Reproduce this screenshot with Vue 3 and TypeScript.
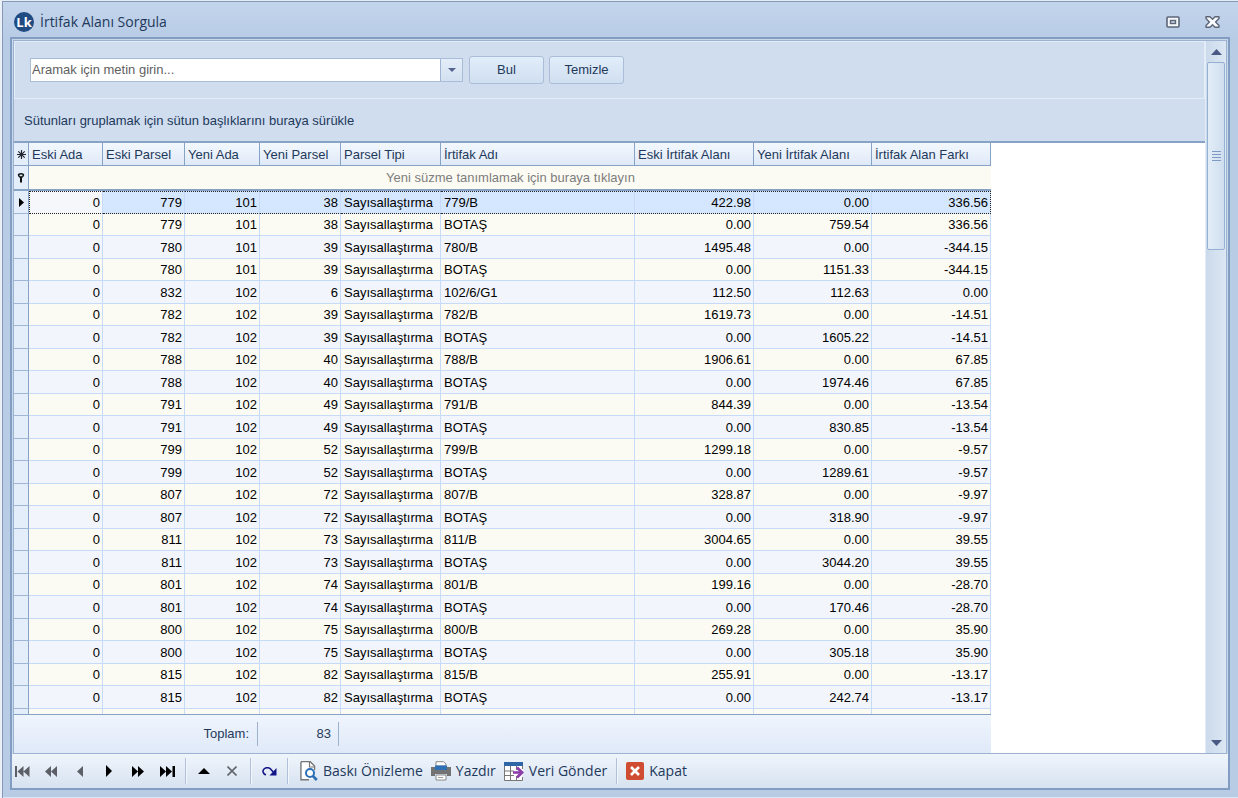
<script setup lang="ts">
import { ref } from 'vue'

interface Row {
  oldAda: string
  oldParsel: string
  newAda: string
  newParsel: string
  type: string
  name: string
  oldArea: string
  newArea: string
  diff: string
}

const columns = [
  'Eski Ada', 'Eski Parsel', 'Yeni Ada', 'Yeni Parsel', 'Parsel Tipi',
  'İrtifak Adı', 'Eski İrtifak Alanı', 'Yeni İrtifak Alanı', 'İrtifak Alan Farkı',
]

const make = (
  oldParsel: string, newAda: string, newParsel: string,
  name: string, oldArea: string, newArea: string, diff: string,
): Row => ({ oldAda: '0', oldParsel, newAda, newParsel, type: 'Sayısallaştırma', name, oldArea, newArea, diff })

const rows: Row[] = [
  make('779', '101', '38', '779/B', '422.98', '0.00', '336.56'),
  make('779', '101', '38', 'BOTAŞ', '0.00', '759.54', '336.56'),
  make('780', '101', '39', '780/B', '1495.48', '0.00', '-344.15'),
  make('780', '101', '39', 'BOTAŞ', '0.00', '1151.33', '-344.15'),
  make('832', '102', '6', '102/6/G1', '112.50', '112.63', '0.00'),
  make('782', '102', '39', '782/B', '1619.73', '0.00', '-14.51'),
  make('782', '102', '39', 'BOTAŞ', '0.00', '1605.22', '-14.51'),
  make('788', '102', '40', '788/B', '1906.61', '0.00', '67.85'),
  make('788', '102', '40', 'BOTAŞ', '0.00', '1974.46', '67.85'),
  make('791', '102', '49', '791/B', '844.39', '0.00', '-13.54'),
  make('791', '102', '49', 'BOTAŞ', '0.00', '830.85', '-13.54'),
  make('799', '102', '52', '799/B', '1299.18', '0.00', '-9.57'),
  make('799', '102', '52', 'BOTAŞ', '0.00', '1289.61', '-9.57'),
  make('807', '102', '72', '807/B', '328.87', '0.00', '-9.97'),
  make('807', '102', '72', 'BOTAŞ', '0.00', '318.90', '-9.97'),
  make('811', '102', '73', '811/B', '3004.65', '0.00', '39.55'),
  make('811', '102', '73', 'BOTAŞ', '0.00', '3044.20', '39.55'),
  make('801', '102', '74', '801/B', '199.16', '0.00', '-28.70'),
  make('801', '102', '74', 'BOTAŞ', '0.00', '170.46', '-28.70'),
  make('800', '102', '75', '800/B', '269.28', '0.00', '35.90'),
  make('800', '102', '75', 'BOTAŞ', '0.00', '305.18', '35.90'),
  make('815', '102', '82', '815/B', '255.91', '0.00', '-13.17'),
  make('815', '102', '82', 'BOTAŞ', '0.00', '242.74', '-13.17'),
]

const selected = ref(0)
const query = ref('')
</script>

<template>
  <div class="window">
    <header class="titlebar">
      <svg class="logo" width="20" height="20" viewBox="0 0 20 20" aria-hidden="true">
        <circle cx="10" cy="10" r="10" fill="#1f4a82" />
        <text x="10" y="15" text-anchor="middle" class="mark">Lk</text>
      </svg>
      <h1>İrtifak Alanı Sorgula</h1>
      <button class="winbtn" type="button" aria-label="Büyüt">
        <svg width="14" height="12" viewBox="0 0 14 12">
          <rect x="1" y="1" width="12" height="10" rx="1" fill="#f4f7fb" stroke="#5d6677" stroke-width="1.6" />
          <rect x="4.5" y="4.5" width="5" height="3" fill="#c9d2e0" stroke="#5d6677" stroke-width="1.4" />
        </svg>
      </button>
      <button class="winbtn" type="button" aria-label="Pencereyi kapat">
        <svg width="15" height="12" viewBox="0 0 15 12">
          <path d="M1 .8h4l2.5 2.4L10 .8h4v1.8L10.6 6 14 9.4v1.8h-4L7.5 8.8 5 11.2H1V9.4L4.4 6 1 2.6z" fill="#f8fafd" stroke="#5d6677" stroke-width="1.4" stroke-linejoin="round" />
        </svg>
      </button>
    </header>

    <main class="client">
      <div class="view">
        <div class="content">
          <form class="find" @submit.prevent>
            <div class="combo">
              <input v-model="query" type="text" aria-label="Aramak için metin girin" placeholder="Aramak için metin girin..." />
              <button type="button" class="drop" aria-label="Geçmiş">
                <svg width="8" height="4" viewBox="0 0 8 4"><path d="M0 0h8L4 4z" fill="#56658f" /></svg>
              </button>
            </div>
            <button type="submit" class="push">Bul</button>
            <button type="button" class="push" @click="query = ''">Temizle</button>
          </form>

          <div class="group">Sütunları gruplamak için sütun başlıklarını buraya sürükle</div>

          <div class="sheet">
            <div class="data">
              <div class="rows">
                <table>
                  <colgroup>
                    <col class="c0" /><col class="c1" /><col class="c2" /><col class="c3" /><col class="c4" />
                    <col class="c5" /><col class="c6" /><col class="c7" /><col class="c8" /><col class="c9" />
                  </colgroup>
                  <thead>
                    <tr>
                      <th class="ind">
                        <svg width="9" height="9" viewBox="0 0 9 9"><path d="M4.5 0v9M0 4.500h9M1.300 1.300l6.400 6.400M7.700 1.300L1.300 7.700" stroke="#20242c" stroke-width="1.200" /></svg>
                      </th>
                      <th v-for="c in columns" :key="c" scope="col">{{ c }}</th>
                    </tr>
                    <tr class="filter">
                      <td class="ind">
                        <svg width="8" height="10" viewBox="0 0 8 10"><path d="M1 1q3-2 6 0 .8 2.400-2 4v4.600H3V5Q.2 3.400 1 1z" fill="#111" /><rect x="2.600" y="1.600" width="2.800" height="1.600" fill="#dce8f6" /></svg>
                      </td>
                      <td colspan="9">Yeni süzme tanımlamak için buraya tıklayın</td>
                    </tr>
                  </thead>
                  <tbody>
                    <tr v-for="(r, i) in rows" :key="i" :class="{ selected: i === selected }" @click="selected = i">
                      <td class="ind">
                        <svg v-if="i === selected" width="5" height="9" viewBox="0 0 5 9"><path d="M0 0l5 4.500L0 9z" fill="#000" /></svg>
                      </td>
                      <td class="num focus">{{ r.oldAda }}</td>
                      <td class="num">{{ r.oldParsel }}</td>
                      <td class="num">{{ r.newAda }}</td>
                      <td class="num">{{ r.newParsel }}</td>
                      <td>{{ r.type }}</td>
                      <td>{{ r.name }}</td>
                      <td class="num">{{ r.oldArea }}</td>
                      <td class="num">{{ r.newArea }}</td>
                      <td class="num">{{ r.diff }}</td>
                    </tr>
                    <tr>
                      <td class="ind"></td>
                      <td v-for="c in columns" :key="c"></td>
                    </tr>
                  </tbody>
                </table>
              </div>
              <div class="summary">
                <span class="total">Toplam:</span>
                <span class="count">83</span>
              </div>
            </div>
          </div>
        </div>

        <div class="scroll">
          <button type="button" aria-label="Yukarı">
            <svg width="11" height="6" viewBox="0 0 11 6"><path d="M0 6L5.500 0 11 6z" fill="#4b5a85" /></svg>
          </button>
          <div class="track">
            <div class="thumb"><i></i><i></i><i></i><i></i></div>
          </div>
          <button type="button" aria-label="Aşağı">
            <svg width="11" height="6" viewBox="0 0 11 6"><path d="M0 0h11L5.500 6z" fill="#4b5a85" /></svg>
          </button>
        </div>
      </div>

      <nav class="toolbar" aria-label="Araçlar">
        <div class="nav">
          <button type="button" aria-label="İlk kayıt" disabled>
            <svg width="15" height="11" viewBox="0 0 15 11"><path d="M0 0h2v11H0zM8.500 0v11L2.500 5.500zM14.500 0v11l-6-5.500z" fill="#5c6066" /></svg>
          </button>
          <button type="button" aria-label="Önceki sayfa" disabled>
            <svg width="12" height="11" viewBox="0 0 12 11"><path d="M6 0v11L0 5.500zM12 0v11L6 5.500z" fill="#5c6066" /></svg>
          </button>
          <button type="button" aria-label="Önceki kayıt" disabled>
            <svg width="6" height="11" viewBox="0 0 6 11"><path d="M6 0v11L0 5.500z" fill="#5c6066" /></svg>
          </button>
          <button type="button" aria-label="Sonraki kayıt">
            <svg width="6" height="12" viewBox="0 0 6 12"><path d="M0 0v12l6-6z" fill="#000" /></svg>
          </button>
          <button type="button" aria-label="Sonraki sayfa">
            <svg width="12" height="11" viewBox="0 0 12 11"><path d="M0 0v11l6-5.500zM6 0v11l6-5.500z" fill="#000" /></svg>
          </button>
          <button type="button" aria-label="Son kayıt">
            <svg width="15" height="11" viewBox="0 0 15 11"><path d="M0 0v11l6-5.500zM6 0v11l6-5.500zM12.500 0H15v11h-2.500z" fill="#000" /></svg>
          </button>
        </div>
        <span class="sep"></span>
        <div class="nav tight">
          <button type="button" aria-label="Düzenle">
            <svg width="12" height="6" viewBox="0 0 12 6"><path d="M0 6l6-6 6 6z" fill="#000" /></svg>
          </button>
          <button type="button" aria-label="İptal" disabled>
            <svg width="10" height="10" viewBox="0 0 10 10"><path d="M.5.5l9 9M9.500.5l-9 9" stroke="#63676d" stroke-width="1.600" /></svg>
          </button>
        </div>
        <span class="sep"></span>
        <div class="nav">
          <button type="button" aria-label="Yenile">
            <svg width="15" height="9" viewBox="0 0 15 9"><path d="M4 7.800C.8 7.200.3 3.600 2 2 4 .2 7 .4 8.600 2l2.600 3" fill="none" stroke="#15158a" stroke-width="1.600" /><path d="M14.500 1v7.500H7.500z" fill="#15158a" /></svg>
          </button>
        </div>
        <span class="sep"></span>
        <button type="button" class="cmd">
          <svg width="18" height="20" viewBox="0 0 18 20">
            <path d="M1 .8h9.200L14.500 5v4M1 .8v18h8" fill="none" stroke="#777" stroke-width="1.500" />
            <path d="M1.800 1.600h8L13.800 6v12H1.800z" fill="#fff" />
            <path d="M9.500 1v5h5" fill="none" stroke="#777" stroke-width="1.200" />
            <circle cx="10" cy="12" r="4" fill="#fff" stroke="#2d6fb5" stroke-width="2" />
            <path d="M12.800 15l4 4" stroke="#2d6fb5" stroke-width="2.600" />
          </svg>
          <span>Baskı Önizleme</span>
        </button>
        <button type="button" class="cmd">
          <svg width="20" height="20" viewBox="0 0 20 20">
            <path d="M0 6h4v3h12V6h4v9h-4v-2H4v2H0z" fill="#737373" />
            <path d="M5 .7h7.500L15 3v2H5z" fill="#fff" stroke="#888" />
            <path d="M4 4.500h12V9H4z" fill="#2f70b5" />
            <path d="M5 14h10v5H5z" fill="#fff" stroke="#888" />
            <path d="M7 16.500h5" stroke="#999" />
          </svg>
          <span>Yazdır</span>
        </button>
        <button type="button" class="cmd">
          <svg width="20" height="19" viewBox="0 0 20 19">
            <path d="M.5.500h18v18H.500z" fill="#fff" />
            <path d="M.5 4v14.500h18V15M.5 9H10M.5 13.500H10M6.500 4v14.500M12.500 4v4M12.500 14v4M18.500 4v3" fill="none" stroke="#777" />
            <path d="M0 0h19v4H0z" fill="#2f66a5" />
            <path d="M9 10.500h8" stroke="#8c3fa8" stroke-width="2.600" />
            <path d="M13 5.500l5 5-5 5" fill="none" stroke="#8c3fa8" stroke-width="2.800" />
          </svg>
          <span>Veri Gönder</span>
        </button>
        <span class="sep near"></span>
        <button type="button" class="cmd">
          <svg width="18" height="18" viewBox="0 0 18 18">
            <rect width="18" height="18" rx="2" fill="#cf4c33" />
            <path d="M5 5l8 8M13 5l-8 8" stroke="#fff" stroke-width="2.600" />
          </svg>
          <span>Kapat</span>
        </button>
      </nav>
    </main>
  </div>
</template>

<style>
body {
  background: #e9f1fa;
}
</style>

<style scoped>
* {
  box-sizing: border-box;
}

.window {
  display: flex;
  flex-direction: column;
  height: 100vh;
  padding: 1px 8px 8px 8px;
  border-top: 1px solid #e4edf5;
  border-left: 2px solid #eaf1f8;
  background: linear-gradient(#c3d5ec, #b9cce6 36px);
  box-shadow: inset 1px 1px 0 #8799b2, inset 0 -1px 0 #d8e5f4;
  color: #1e395b;
  font: 13px/16px "Liberation Sans", Arial, sans-serif;
}

button {
  display: flex;
  align-items: center;
  justify-content: center;
  padding: 0;
  border: 0;
  background: none;
  color: inherit;
  font: inherit;
}

.titlebar {
  display: flex;
  flex: none;
  align-items: center;
  height: 35px;
  padding: 5px 6px 0 4px;
}

.titlebar h1 {
  flex: 1;
  margin: 0 0 0 6px;
  font: 14px/18px "Open Sans", "Noto Sans", sans-serif;
}

.mark {
  fill: #fff;
  font: bold 13px "Open Sans", sans-serif;
}

.winbtn {
  width: 24px;
  height: 20px;
  margin-left: 15px;
}

.client {
  display: flex;
  flex: 1;
  flex-direction: column;
  min-height: 0;
  border: 2px solid #819dc1;
  background: #c8d8eb;
}

.view {
  display: flex;
  flex: 1;
  min-height: 0;
  margin: 1px 1px 0 1px;
  border: 1px solid #9db2d0;
  background: #cfddee;
}

.content {
  display: flex;
  flex: 1;
  flex-direction: column;
  min-width: 0;
}

.find {
  display: flex;
  flex: none;
  align-items: center;
  height: 58px;
  padding: 0 15px;
  border: 1px solid #e3edf8;
}

.combo {
  display: flex;
  width: 433px;
  height: 24px;
  margin-right: 6px;
  border: 1px solid #a9bcd8;
  background: #fff;
}

.combo input {
  flex: 1;
  min-width: 0;
  padding: 0 1px;
  border: 0;
  outline: 0;
  background: none;
  font: inherit;
}

.combo input::placeholder {
  color: #5f5f5f;
  opacity: 1;
}

.drop {
  width: 22px;
  border-left: 1px solid #9fb5d3;
  background: linear-gradient(#e4eef9, #d2e0f0);
}

.push {
  width: 75px;
  height: 28px;
  margin-right: 5px;
  border: 1px solid #abbdd8;
  border-radius: 3px;
  background: linear-gradient(#e1edfa, #d0dff0);
}

.group {
  flex: none;
  height: 42px;
  padding: 14px 10px 0;
}

.sheet {
  display: flex;
  flex: 1;
  min-height: 0;
  border-top: 2px solid #86a3c5;
  background: #fff;
}

.data {
  display: flex;
  flex-direction: column;
  width: 977px;
}

.rows {
  flex: 1;
  min-height: 0;
  overflow: hidden;
  border-bottom: 1px solid #86a3c5;
}

table {
  width: 100%;
  table-layout: fixed;
  border-collapse: separate;
  border-spacing: 0;
}

.c0 { width: 15px; }
.c1 { width: 74px; }
.c2 { width: 82px; }
.c3 { width: 75px; }
.c4 { width: 81px; }
.c5 { width: 100px; }
.c6 { width: 194px; }
.c7 { width: 119px; }
.c8 { width: 118px; }
.c9 { width: 119px; }

th,
td {
  overflow: hidden;
  padding: 0 2px 0 3px;
  text-align: left;
  white-space: nowrap;
}

th {
  height: 23px;
  padding-top: 2px;
  border-right: 1px solid #86a3c5;
  border-bottom: 1px solid #86a3c5;
  background: linear-gradient(#f3f8fe, #dfe9f7);
  font-weight: normal;
}

.filter td {
  height: 25px;
  border-bottom: 2px solid #86a3c5;
  background: #fcfbf3;
  color: #7d7d7d;
  text-align: center;
}

tbody td {
  height: 22px;
  padding-top: 1px;
  border-right: 1px solid #c5dbf7;
  border-bottom: 1px solid #c5dbf7;
  background: #fcfbf3;
  color: #000;
}

tbody tr:nth-child(odd) td {
  height: 23px;
  background: #f2f5fb;
}

td.num {
  text-align: right;
}

tbody tr.selected:nth-child(n) td {
  padding-top: 0;
  border-top: 1px dotted #222;
  border-bottom: 1px dotted #222;
  background: #d5e7ff;
}

tbody tr.selected:nth-child(n) td.focus {
  border-left: 1px dotted #222;
  background: #f5f7fb;
}

tbody tr.selected:nth-child(n) td:last-child {
  padding-right: 2px;
  border-right: 1px dotted #222;
}

th.ind,
.filter .ind,
tbody tr:nth-child(n) td.ind,
tbody tr.selected:nth-child(n) td.ind {
  padding: 0;
  border-top: 0;
  border-right: 1px solid #86a3c5;
  background: #e4eefa;
  text-align: center;
}

tbody tr:nth-child(n) td.ind,
tbody tr.selected:nth-child(n) td.ind {
  border-bottom: 1px solid #9fb7d4;
}

.ind svg {
  display: block;
  margin: auto;
}

.summary {
  display: flex;
  flex: none;
  align-items: center;
  height: 38px;
  background: linear-gradient(#eff5fd, #dfe9f8);
}

.summary span {
  height: 24px;
  border-right: 1px solid #9db2d0;
  line-height: 24px;
  text-align: right;
}

.total {
  width: 244px;
  padding-right: 8px;
}

.count {
  width: 81px;
  padding-right: 7px;
}

.scroll {
  display: flex;
  flex: none;
  flex-direction: column;
  width: 21px;
  border-left: 1px solid #e3edf8;
  background: linear-gradient(90deg, #cbdaeb, #dce7f3);
}

.scroll button {
  height: 21px;
}

.track {
  flex: 1;
  min-height: 0;
}

.thumb {
  display: flex;
  flex-direction: column;
  align-items: center;
  justify-content: center;
  gap: 2px;
  height: 28%;
  margin: 0 1px;
  border: 1px solid #93b0d5;
  border-radius: 2px;
  background: linear-gradient(90deg, #e3edf8, #cfdeef);
}

.thumb i {
  width: 9px;
  height: 1px;
  background: #7c9ac4;
}

.toolbar {
  display: flex;
  flex: none;
  align-items: center;
  height: 34px;
  background: linear-gradient(#f0f5fc, #d6e2f0);
  font: 14px/18px "Open Sans", "Noto Sans", sans-serif;
}

.nav {
  display: flex;
  gap: 9px;
}

.nav.tight {
  gap: 8px;
}

.nav button {
  width: 20px;
  height: 24px;
}

.sep {
  width: 1px;
  height: 26px;
  margin: 0 8px;
  background: #afc0d8;
  box-shadow: 1px 0 0 #f2f7fd;
}

.sep.near {
  margin: 0 5px;
}

.cmd {
  gap: 5px;
  height: 28px;
  padding: 0 4px;
}
</style>
